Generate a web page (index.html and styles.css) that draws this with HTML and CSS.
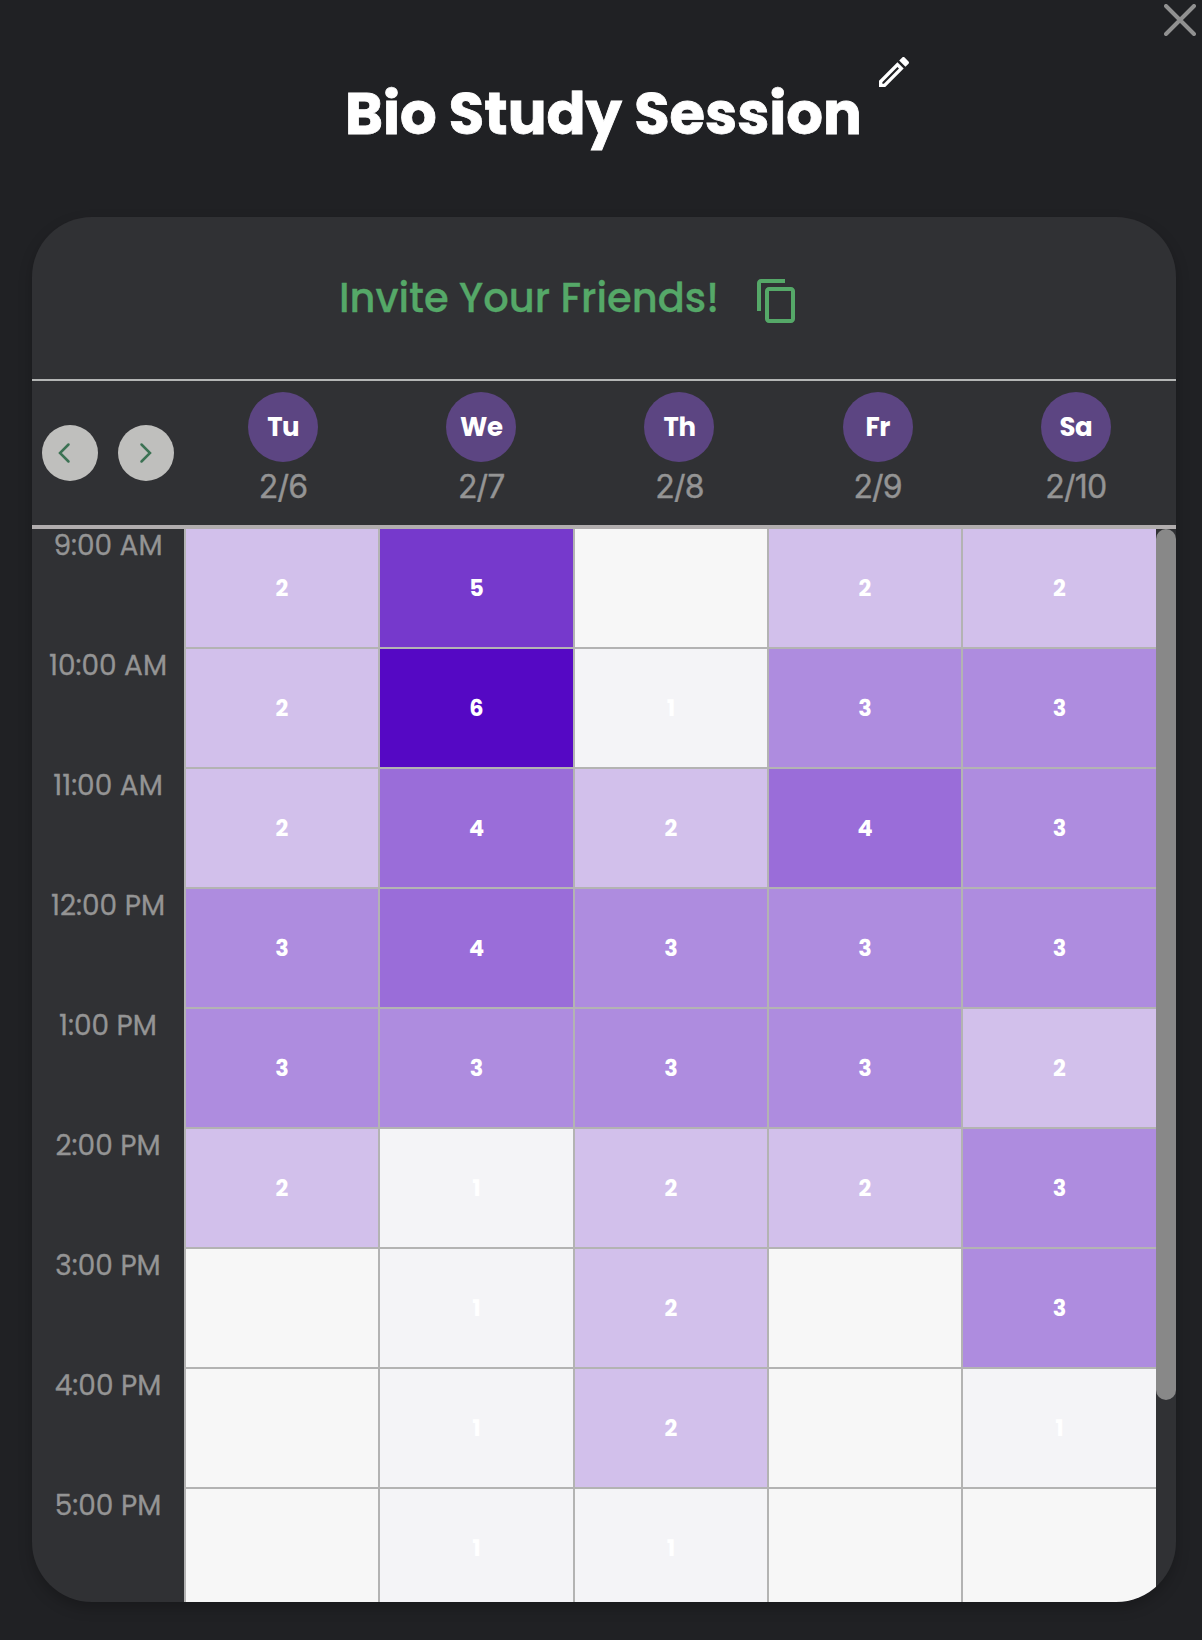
FILE: index.html
```html
<!DOCTYPE html>
<html lang="en">
<head>
<meta charset="utf-8">
<title>Bio Study Session</title>
<link rel="stylesheet" href="styles.css">
</head>
<body>
<header class="top">
  <h1 class="title">Bio Study Session</h1>
  <svg class="edit" viewBox="0 0 24 24"><path d="M14.06 9.02l.92.92L5.92 19H5v-.92l9.06-9.06M17.66 3c-.25 0-.51.1-.7.29l-1.83 1.83 3.75 3.75 1.83-1.83c.39-.39.39-1.02 0-1.41l-2.34-2.34c-.2-.2-.45-.29-.71-.29zm-3.6 3.19L3 17.25V21h3.75L17.81 9.94l-3.75-3.75z"/></svg>
  <svg class="close" viewBox="0 0 32 32"><path d="M2 2 30 30M30 2 2 30"/></svg>
</header>
<main class="card">
  <section class="invite">
    <span class="invite-text">Invite Your Friends!</span>
    <svg class="copy" viewBox="0 0 24 24"><path d="M16 1H4c-1.1 0-2 .9-2 2v14h2V3h12V1zm3 4H8c-1.1 0-2 .9-2 2v14c0 1.1.9 2 2 2h11c1.1 0 2-.9 2-2V7c0-1.1-.9-2-2-2zm0 16H8V7h11v14z"/></svg>
  </section>
  <section class="days">
    <div class="nav">
      <button class="arrow"><svg viewBox="0 0 56 56"><path d="M26.500 19.500 18 28 26.500 36.500"/></svg></button>
      <button class="arrow"><svg viewBox="0 0 56 56"><path d="M23.500 19.500 32 28 23.500 36.500"/></svg></button>
    </div>
    <div class="day"><b class="badge">Tu</b><span class="date">2/6</span></div>
    <div class="day"><b class="badge">We</b><span class="date">2/7</span></div>
    <div class="day"><b class="badge">Th</b><span class="date">2/8</span></div>
    <div class="day"><b class="badge">Fr</b><span class="date">2/9</span></div>
    <div class="day"><b class="badge">Sa</b><span class="date">2/10</span></div>
  </section>
  <section class="body">
    <div class="times">
      <span class="time">9:00 AM</span><span class="time">10:00 AM</span><span class="time">11:00 AM</span><span class="time">12:00 PM</span><span class="time">1:00 PM</span><span class="time">2:00 PM</span><span class="time">3:00 PM</span><span class="time">4:00 PM</span><span class="time">5:00 PM</span>
    </div>
    <div class="grid">
      <i class="c2">2</i><i class="c5">5</i><i class="c0"></i><i class="c2">2</i><i class="c2">2</i>
      <i class="c2">2</i><i class="c6">6</i><i class="c1">1</i><i class="c3">3</i><i class="c3">3</i>
      <i class="c2">2</i><i class="c4">4</i><i class="c2">2</i><i class="c4">4</i><i class="c3">3</i>
      <i class="c3">3</i><i class="c4">4</i><i class="c3">3</i><i class="c3">3</i><i class="c3">3</i>
      <i class="c3">3</i><i class="c3">3</i><i class="c3">3</i><i class="c3">3</i><i class="c2">2</i>
      <i class="c2">2</i><i class="c1">1</i><i class="c2">2</i><i class="c2">2</i><i class="c3">3</i>
      <i class="c0"></i><i class="c1">1</i><i class="c2">2</i><i class="c0"></i><i class="c3">3</i>
      <i class="c0"></i><i class="c1">1</i><i class="c2">2</i><i class="c0"></i><i class="c1">1</i>
      <i class="c0"></i><i class="c1">1</i><i class="c1">1</i><i class="c0"></i><i class="c0"></i>
    </div>
    <div class="track"><div class="thumb"></div></div>
  </section>
</main>
</body>
</html>
```
FILE: styles.css
```css
* { box-sizing: border-box; }
body {
  margin: 0;
  height: 1640px;
  overflow: hidden;
  background: #202124;
  font-family: Poppins, Inter, "Liberation Sans", sans-serif;
}
.top {
  position: relative;
  height: 217px;
  padding-top: 79px;
  padding-left: 345px;
}
.title {
  margin: 0;
  color: #fff;
  font-size: 57.6px;
  line-height: 70px;
  font-weight: 700;
  white-space: nowrap;
  -webkit-text-stroke: .8px #fff;
}
.edit {
  position: absolute;
  left: 874px;
  top: 52px;
  width: 40px;
  height: 40px;
  fill: #fff;
}
.close {
  position: absolute;
  left: 1164px;
  top: 4px;
  width: 32px;
  height: 32px;
  fill: none;
  stroke: #919191;
  stroke-width: 4;
  stroke-linecap: round;
}
.card {
  display: flex;
  flex-direction: column;
  width: 1144px;
  height: 1385px;
  margin-left: 32px;
  border-radius: 60px;
  background: #303134;
  overflow: hidden;
  box-shadow: 0 6px 14px rgba(0, 0, 0, .22);
}
.invite {
  display: flex;
  flex: none;
  height: 164px;
  padding: 60px 0 0 307px;
  border-bottom: 2px solid #b4b6b5;
}
.invite-text {
  width: 414px;
  color: #55a868;
  font-size: 40px;
  line-height: 43px;
  font-weight: 500;
  white-space: nowrap;
  -webkit-text-stroke: .3px #55a868;
}
.copy {
  width: 48px;
  height: 48px;
  fill: #55a868;
}
.days {
  display: grid;
  flex: none;
  grid-template-columns: 152px repeat(5, 198.2px);
  height: 148px;
  border-bottom: 4px solid #b1adae;
}
.nav {
  display: flex;
  gap: 20px;
  padding: 44px 0 0 10px;
}
.arrow {
  width: 56px;
  height: 56px;
  padding: 0;
  border: 0;
  border-radius: 50%;
  background: #bfbfbd;
}
.arrow svg {
  display: block;
  width: 56px;
  height: 56px;
  fill: none;
  stroke: #3c7254;
  stroke-width: 2.5;
  stroke-linecap: round;
}
.day {
  display: flex;
  flex-direction: column;
  align-items: center;
  padding-top: 11px;
}
.badge {
  width: 70px;
  height: 70px;
  border-radius: 50%;
  background: #5c4582;
  color: #fff;
  font-size: 26px;
  line-height: 71px;
  font-weight: 700;
  letter-spacing: -.5px;
  text-align: center;
}
.date {
  margin-top: 5px;
  color: #949494;
  font-family: Inter, sans-serif;
  font-size: 32px;
  line-height: 40px;
  letter-spacing: -.8px;
  -webkit-text-stroke: .4px #949494;
}
.body {
  display: grid;
  flex: 1;
  grid-template-columns: 152px 972px 20px;
  min-height: 0;
}
.times {
  display: flex;
  flex-direction: column;
}
.time {
  flex: none;
  height: 120px;
  color: #949494;
  font-size: 28px;
  line-height: 34px;
  text-align: center;
  -webkit-text-stroke: .3px #949494;
}
.grid {
  display: grid;
  grid-template-columns: 194px 195px 194px 194px 195px;
  grid-auto-rows: 120px;
}
.grid i {
  display: flex;
  align-items: center;
  justify-content: center;
  border-left: 2px solid #b3b3b3;
  border-bottom: 2px solid #b3b3b3;
  color: #fff;
  font-size: 22.4px;
  line-height: 30px;
  font-style: normal;
  font-weight: 700;
}
.grid .c0 { background: #f7f7f7; }
.grid .c1 { background: #f4f4f7; }
.grid .c2 { background: #d2c0eb; }
.grid .c3 { background: #ae8cdf; }
.grid .c4 { background: #9a6dd9; }
.grid .c5 { background: #7639cc; }
.grid .c6 { background: #5508c4; }
.thumb {
  height: 871px;
  border-radius: 10px;
  background: #888;
}
```
